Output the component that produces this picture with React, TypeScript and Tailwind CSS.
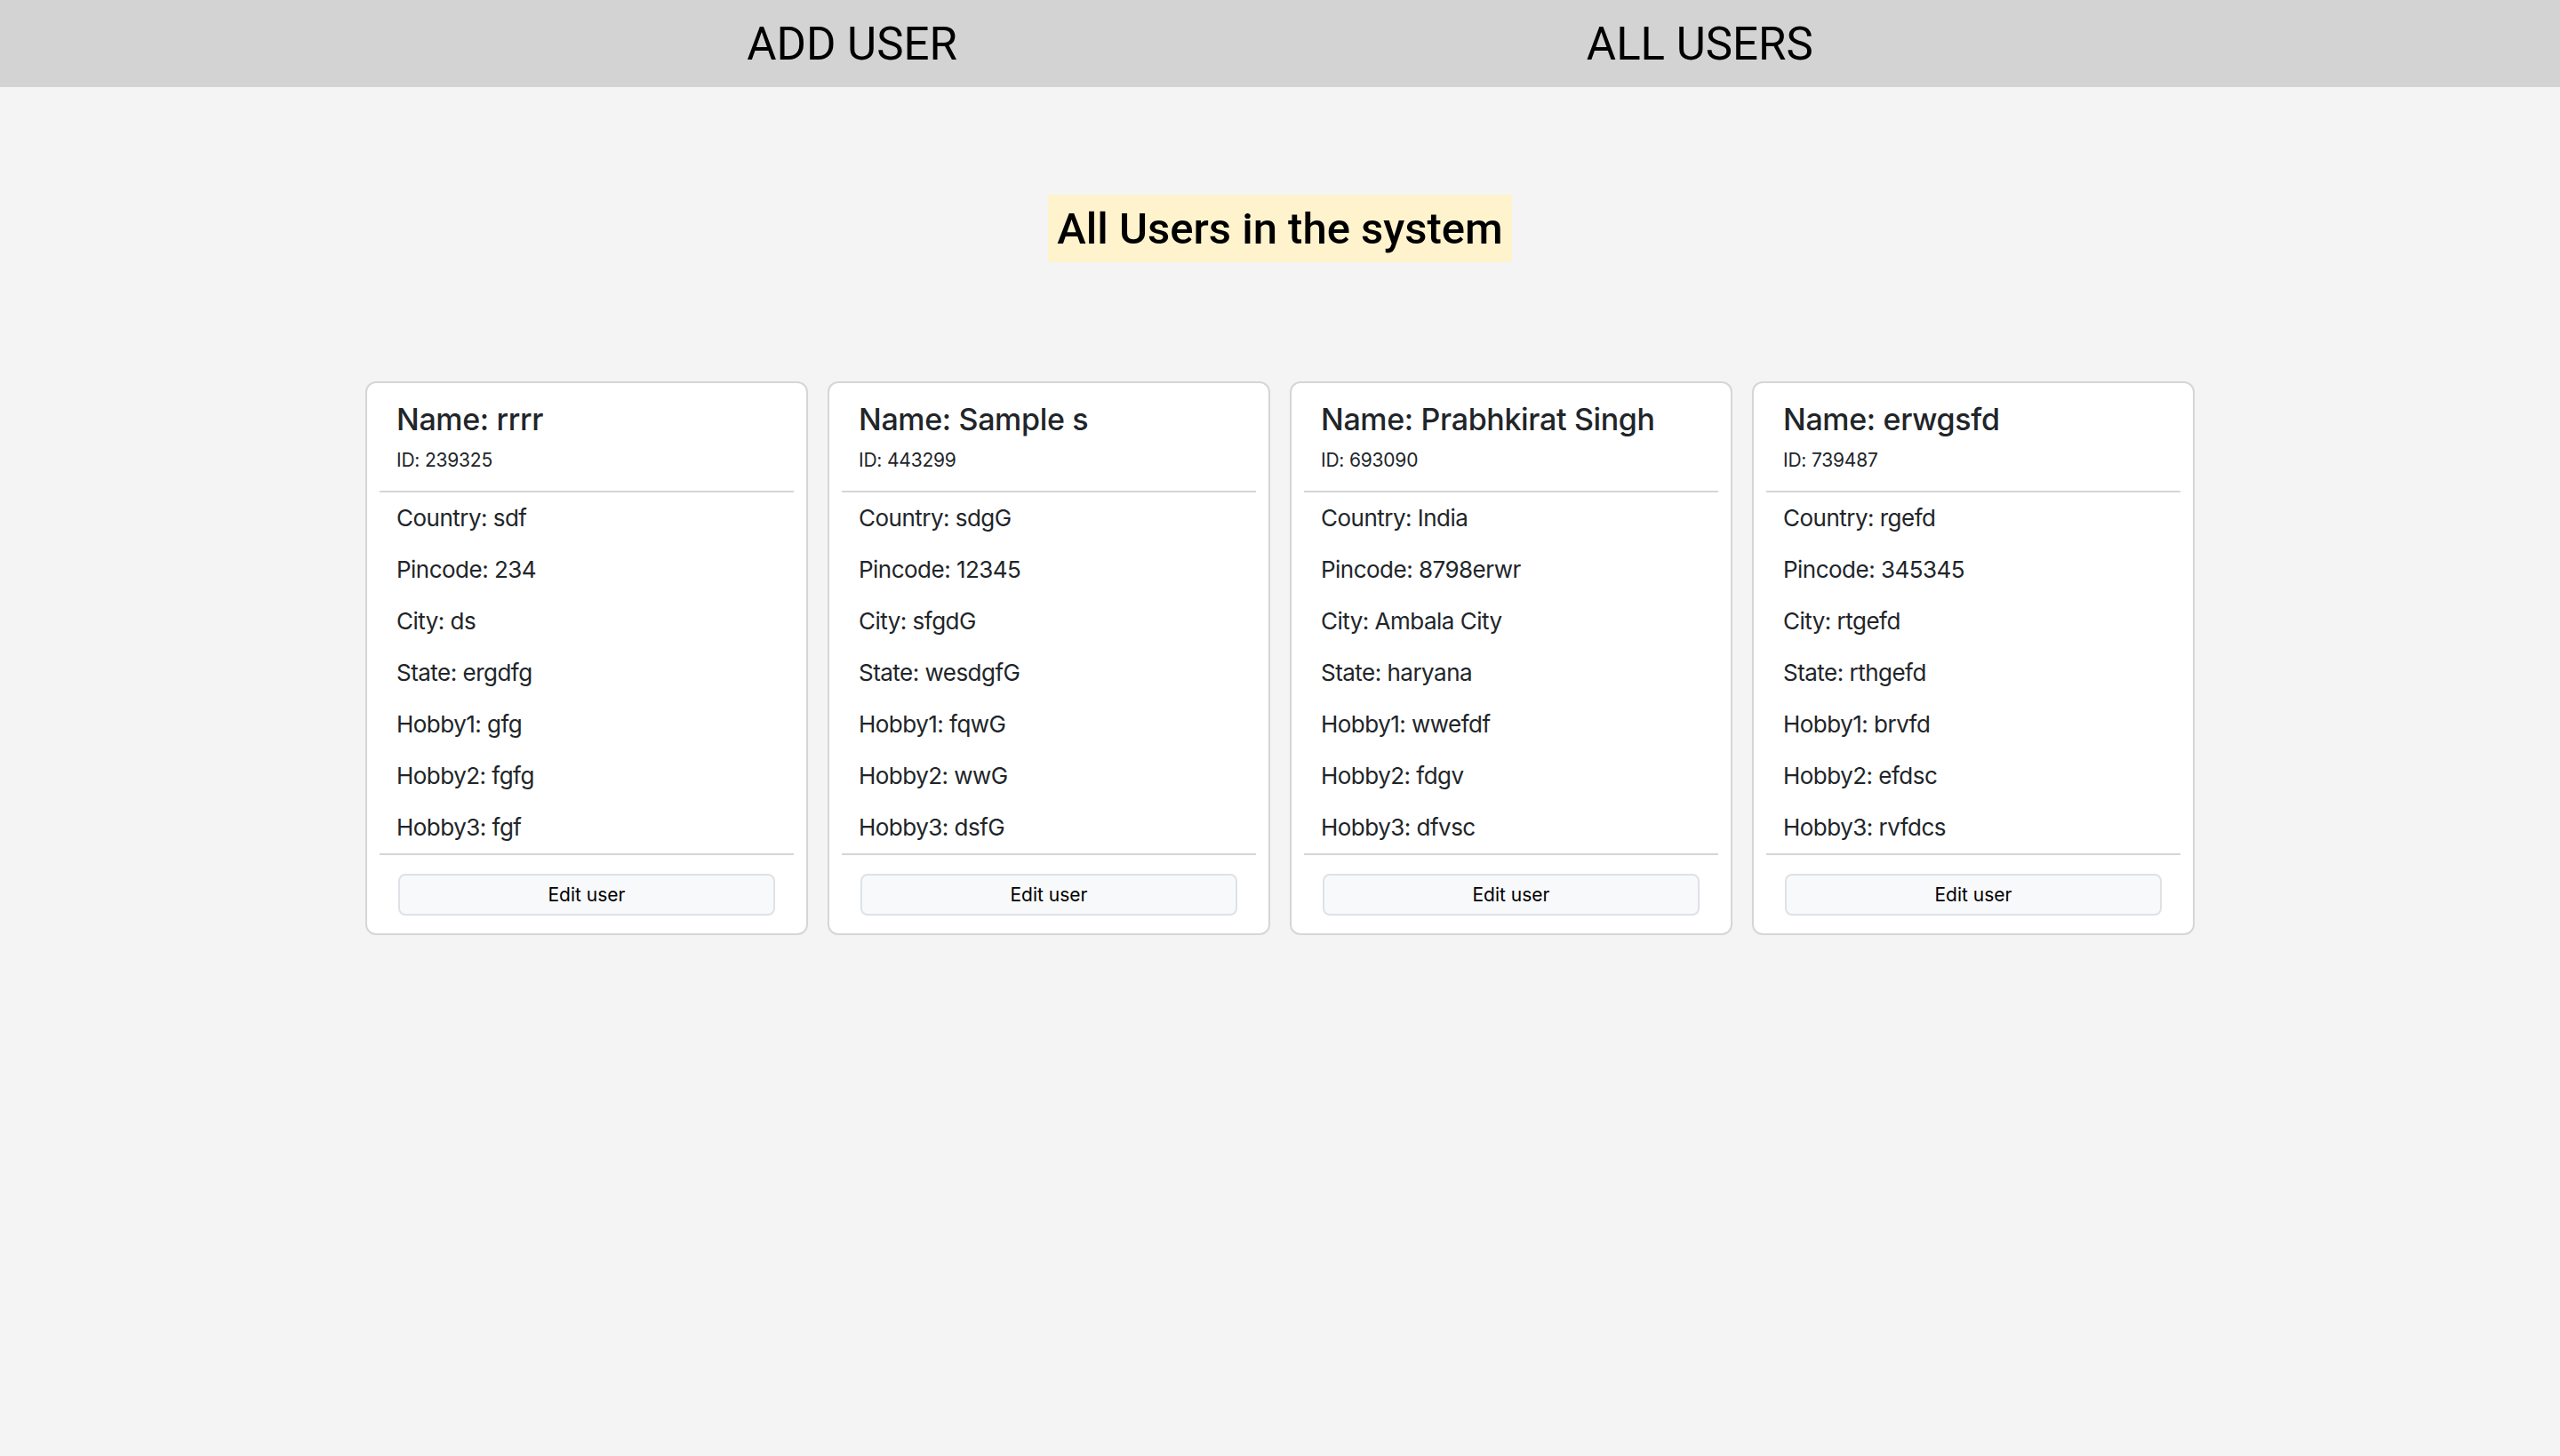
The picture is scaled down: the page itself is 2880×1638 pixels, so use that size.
const users = [
  {
    name: "rrrr",
    id: "239325",
    country: "sdf",
    pincode: "234",
    city: "ds",
    state: "ergdfg",
    hobby1: "gfg",
    hobby2: "fgfg",
    hobby3: "fgf",
  },
  {
    name: "Sample s",
    id: "443299",
    country: "sdgG",
    pincode: "12345",
    city: "sfgdG",
    state: "wesdgfG",
    hobby1: "fqwG",
    hobby2: "wwG",
    hobby3: "dsfG",
  },
  {
    name: "Prabhkirat Singh",
    id: "693090",
    country: "India",
    pincode: "8798erwr",
    city: "Ambala City",
    state: "haryana",
    hobby1: "wwefdf",
    hobby2: "fdgv",
    hobby3: "dfvsc",
  },
  {
    name: "erwgsfd",
    id: "739487",
    country: "rgefd",
    pincode: "345345",
    city: "rtgefd",
    state: "rthgefd",
    hobby1: "brvfd",
    hobby2: "efdsc",
    hobby3: "rvfdcs",
  },
];

type User = (typeof users)[number];

const UserCard = ({ user }: { user: User }) => {
  const rows = [
    `Country: ${user.country}`,
    `Pincode: ${user.pincode}`,
    `City: ${user.city}`,
    `State: ${user.state}`,
    `Hobby1: ${user.hobby1}`,
    `Hobby2: ${user.hobby2}`,
    `Hobby3: ${user.hobby3}`,
  ];

  return (
    <div className="w-[498px] bg-white border-2 border-[#d6d6d6] rounded-[12px] text-[#212529] font-['Inter',sans-serif]">
      <div className="px-[33px] pt-[19px] pb-[20px]">
        <h5 className="text-[34px] leading-[44px] font-medium tracking-[-0.01em]">
          Name: {user.name}
        </h5>
        <p className="mt-[10px] text-[21px] leading-[28px] tracking-[-0.01em]">
          ID: {user.id}
        </p>
      </div>
      <ul className="mx-[14px] border-y-2 border-[#d6d6d6]">
        {rows.map((row) => (
          <li
            key={row}
            className="px-[19px] py-[9px] text-[26px] leading-[40px] tracking-[-0.02em]"
          >
            {row}
          </li>
        ))}
      </ul>
      <div className="px-[35px] pt-[21px] pb-[20px]">
        <button className="w-full h-[47px] bg-[#f8f9fa] border-2 border-[#dee2e6] rounded-[8px] text-[21px] text-black">
          Edit user
        </button>
      </div>
    </div>
  );
};

const App = () => {
  return (
    <div className="min-h-screen bg-[#f4f4f4]">
      <nav className="h-[98px] pt-[2px] bg-[#d3d3d3] flex justify-center items-center gap-[708px] font-['Roboto',sans-serif] text-[51px] text-black">
        <a href="#">ADD USER</a>
        <a href="#">ALL USERS</a>
      </nav>
      <div className="mt-[121px] flex justify-center">
        <h1 className="h-[76px] px-[10px] pt-[2px] flex items-center bg-[#fff3cd] font-['Roboto',sans-serif] font-medium text-[49px] text-black">
          All Users in the system
        </h1>
      </div>
      <div className="mt-[134px] flex justify-center items-start gap-[22px]">
        {users.map((user) => (
          <UserCard key={user.id} user={user} />
        ))}
      </div>
    </div>
  );
};

export default App;
